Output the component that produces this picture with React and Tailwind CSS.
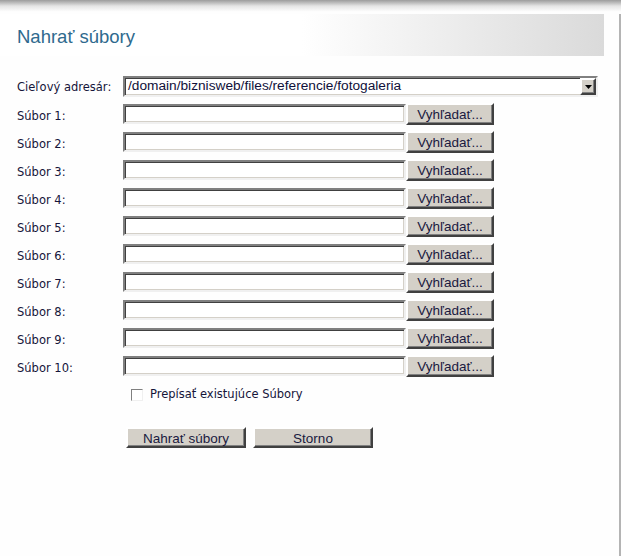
import { useState } from 'react';

const rows = [1, 2, 3, 4, 5, 6, 7, 8, 9, 10];

const inset =
  'border-2 border-t-[#808080] border-l-[#808080] border-b-[#f0f0f0] border-r-[#f0f0f0] shadow-[inset_1px_1px_0_#404040,inset_-1px_-1px_0_#d4d0c8]';
const outset =
  'bg-[#d4d0c8] border-2 border-t-white border-l-white border-b-[#404040] border-r-[#404040] shadow-[inset_-1px_-1px_0_#808080]';

function FileRow({ n }) {
  return (
    <div className="flex h-[28px] items-start">
      <label className="w-[106px] pt-[4px] text-[11.5px] text-[#15153a]">Súbor {n}:</label>
      <input type="text" className={`h-[20px] w-[283px] bg-white ${inset}`} />
      <button
        type="button"
        className={`-mt-px h-[22px] w-[88px] text-[13.5px] text-[#1a1a40] font-['Liberation_Sans',Arial,sans-serif] ${outset}`}
      >
        Vyhľadať...
      </button>
    </div>
  );
}

export default function App() {
  const [overwrite, setOverwrite] = useState(false);

  return (
    <div className="h-[556px] w-[621px] bg-[#fefefe] font-['DejaVu_Sans',Tahoma,sans-serif]">
      <div className="h-[12px] bg-linear-to-b from-[#9c9c9c] via-[#e4e4e4] to-white" />
      <div className="h-[544px] border-r-2 border-[#b4b4b4]">
        <div className="mr-[15px] mt-[2px] flex h-[42px] items-center bg-linear-to-r from-white from-50% to-[#dadada] pl-[17px]">
          <h1 className="pt-[4px] text-[18.5px] text-[#2f6a8e] font-['Liberation_Sans',Arial,sans-serif]">
            Nahrať súbory
          </h1>
        </div>

        <div className="pl-[17px] pt-[20px]">
          <div className="flex h-[28px] items-start">
            <label className="w-[106px] pt-[3px] text-[11.5px] text-[#15153a]">Cieľový adresár:</label>
            <div className={`flex h-[21px] w-[475px] items-center bg-white ${inset}`}>
              <span className="flex-1 pl-[3px] text-[13.7px] text-[#10103a] font-['Liberation_Sans',Arial,sans-serif]">
                /domain/biznisweb/files/referencie/fotogaleria
              </span>
              <span className={`flex h-[17px] w-[16px] items-center justify-center ${outset}`}>
                <svg width="7" height="4" viewBox="0 0 7 4">
                  <path d="M0 0h7L3.5 4z" fill="#000" />
                </svg>
              </span>
            </div>
          </div>

          {rows.map((n) => (
            <FileRow key={n} n={n} />
          ))}

          <label className="ml-[114px] mt-[2px] flex items-center gap-[7px] text-[11.5px] text-[#15153a]">
            <input
              type="checkbox"
              checked={overwrite}
              onChange={() => setOverwrite(!overwrite)}
              className={`h-[12px] w-[12px] appearance-none bg-white ${inset} border-[1px] shadow-none`}
            />
            Prepísať existujúce Súbory
          </label>

          <div className="ml-[109px] mt-[24px] flex gap-[7px]">
            <button
              type="button"
              className={`h-[21px] w-[120px] text-[13.5px] text-[#1a1a40] font-['Liberation_Sans',Arial,sans-serif] ${outset}`}
            >
              Nahrať súbory
            </button>
            <button
              type="button"
              className={`h-[21px] w-[120px] text-[13.5px] text-[#1a1a40] font-['Liberation_Sans',Arial,sans-serif] ${outset}`}
            >
              Storno
            </button>
          </div>
        </div>
      </div>
    </div>
  );
}
